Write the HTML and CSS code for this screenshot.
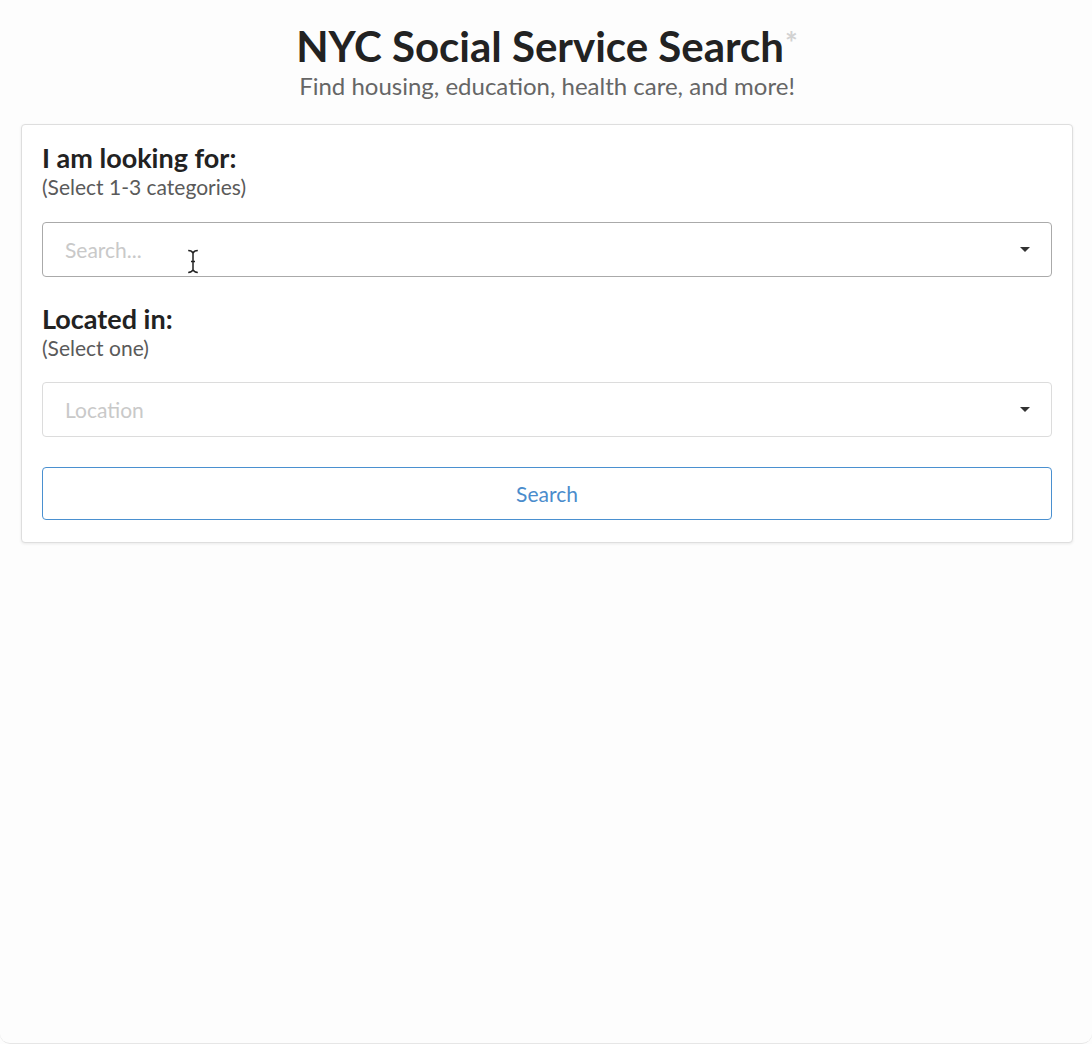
FILE: index.html
```html
<!DOCTYPE html>
<html lang="en">
<head>
<meta charset="utf-8">
<title>NYC Social Service Search</title>
<link rel="stylesheet" href="styles.css">
</head>
<body>
<div class="window">
  <header class="header">
    <h1 class="title">NYC Social Service Search<span class="asterisk">*</span></h1>
    <p class="subtitle">Find housing, education, health care, and more!</p>
  </header>
  <form class="card">
    <div class="field">
      <div class="label">I am looking for:</div>
      <div class="hint">(Select 1-3 categories)</div>
      <div class="select select-active">
        <span class="placeholder">Search...</span>
        <span class="caret"></span>
        <svg class="cursor" width="12" height="25" viewBox="0 0 12 24" preserveAspectRatio="none">
          <path d="M1.2 1.5 Q5 1.5 6 4 Q7 1.5 10.8 1.5 M6 4 V20 M1.2 22.5 Q5 22.5 6 20 Q7 22.5 10.8 22.5 M4 12 H8" fill="none" stroke="#222" stroke-width="1.5"/>
        </svg>
      </div>
    </div>
    <div class="field field-second">
      <div class="label">Located in:</div>
      <div class="hint">(Select one)</div>
      <div class="select">
        <span class="placeholder">Location</span>
        <span class="caret"></span>
      </div>
    </div>
    <button type="button" class="button">Search</button>
  </form>
</div>
</body>
</html>
```
FILE: styles.css
```css
* { box-sizing: border-box; }
html, body { margin: 0; padding: 0; height: 100%; }
body {
  background: #fdfdfd;
  font-family: Lato, "Open Sans", Arial, sans-serif;
  color: #222;
}
.window {
  height: 1044px;
  padding: 21px 19px 0 21px;
  border-bottom-left-radius: 10px;
  border-bottom-right-radius: 10px;
  border-bottom: 1px solid #e6e6e6;
}
.header { text-align: center; }
.title {
  margin: 0;
  font-size: 42px;
  font-weight: 700;
  line-height: 50px;
  color: #222;
}
.asterisk {
  color: #d2d2d2;
  font-size: 30px;
  font-weight: 700;
  vertical-align: top;
  position: relative;
  top: -4px;
  margin-left: 1px;
}
.subtitle {
  margin: 0;
  font-size: 24px;
  line-height: 30px;
  color: #666;
}
.card {
  margin-top: 23px;
  background: #fff;
  border: 1px solid #dedede;
  border-radius: 4px;
  box-shadow: 0 1px 3px rgba(0,0,0,0.08);
  padding: 16px 20px 22px 20px;
}
.field { margin-bottom: 25px; }
.field-second { margin-bottom: 30px; }
.label {
  font-size: 27px;
  font-weight: 700;
  line-height: 34px;
  color: #222;
}
.hint {
  font-size: 21px;
  line-height: 24px;
  color: #5a5a5a;
  margin-bottom: 23px;
}
.field-second .hint { margin-bottom: 22px; }
.select {
  position: relative;
  height: 55px;
  border: 1px solid #dcdcdc;
  border-radius: 4px;
  background: #fff;
  display: flex;
  align-items: center;
  padding: 0 22px;
}
.select-active { border-color: #aaa; }
.placeholder {
  flex: 1;
  font-size: 21px;
  color: #c9c9c9;
}
.caret {
  width: 0;
  height: 0;
  border-left: 5px solid transparent;
  border-right: 5px solid transparent;
  border-top: 5px solid #333;
  margin-right: -1px;
}
.cursor {
  position: absolute;
  left: 144px;
  top: 26px;
}
.button {
  display: block;
  width: 100%;
  height: 53px;
  border: 1px solid #4a90d0;
  border-radius: 4px;
  background: #fff;
  font-family: inherit;
  font-size: 21px;
  color: #4a8ccc;
  cursor: pointer;
}
```
